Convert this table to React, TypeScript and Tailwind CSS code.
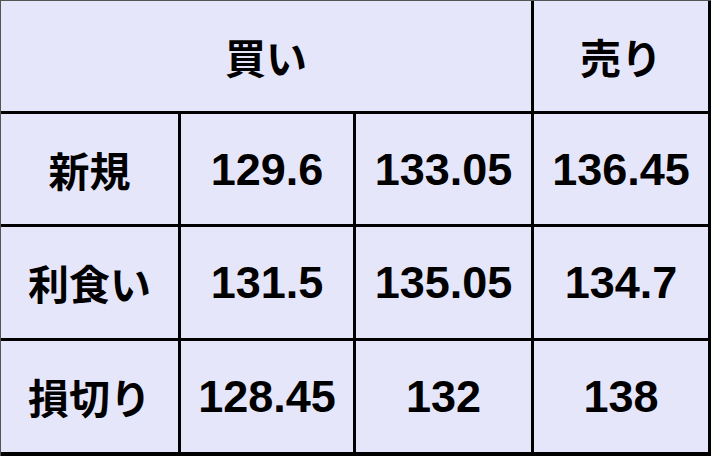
import React from "react";

function Cell({ children, jpText, className = "" }: { children: React.ReactNode; jpText?: boolean; className?: string }) {
  return (
    <div
      className={`flex items-center justify-center bg-[#e6e6fa] text-black leading-none ${
        jpText
          ? "text-[41px] font-bold font-['Noto_Sans_CJK_JP',sans-serif]"
          : "text-[45px] font-bold font-['Liberation_Sans',Arial,sans-serif]"
      } ${className}`}
    >
      {children}
    </div>
  );
}

export default function App() {
  const rows: [string, string, string, string][] = [
    ["新規", "129.6", "133.05", "136.45"],
    ["利食い", "131.5", "135.05", "134.7"],
    ["損切り", "128.45", "132", "138"],
  ];
  return (
    <div className="w-[711px] h-[456px] bg-black border-l border-t border-l-[#555] border-t-[#555] pr-[3px] pb-[4px]">
      <div className="grid grid-cols-[177px_172px_175px_174px] grid-rows-[110px_110px_111px_111px] gap-[3px] bg-black w-[707px] h-[451px]">
        <Cell jpText className="col-span-3">買い</Cell>
        <Cell jpText>売り</Cell>
        {rows.map((r) => (
          <React.Fragment key={r[0]}>
            <Cell jpText>{r[0]}</Cell>
            <Cell>{r[1]}</Cell>
            <Cell>{r[2]}</Cell>
            <Cell>{r[3]}</Cell>
          </React.Fragment>
        ))}
      </div>
    </div>
  );
}
